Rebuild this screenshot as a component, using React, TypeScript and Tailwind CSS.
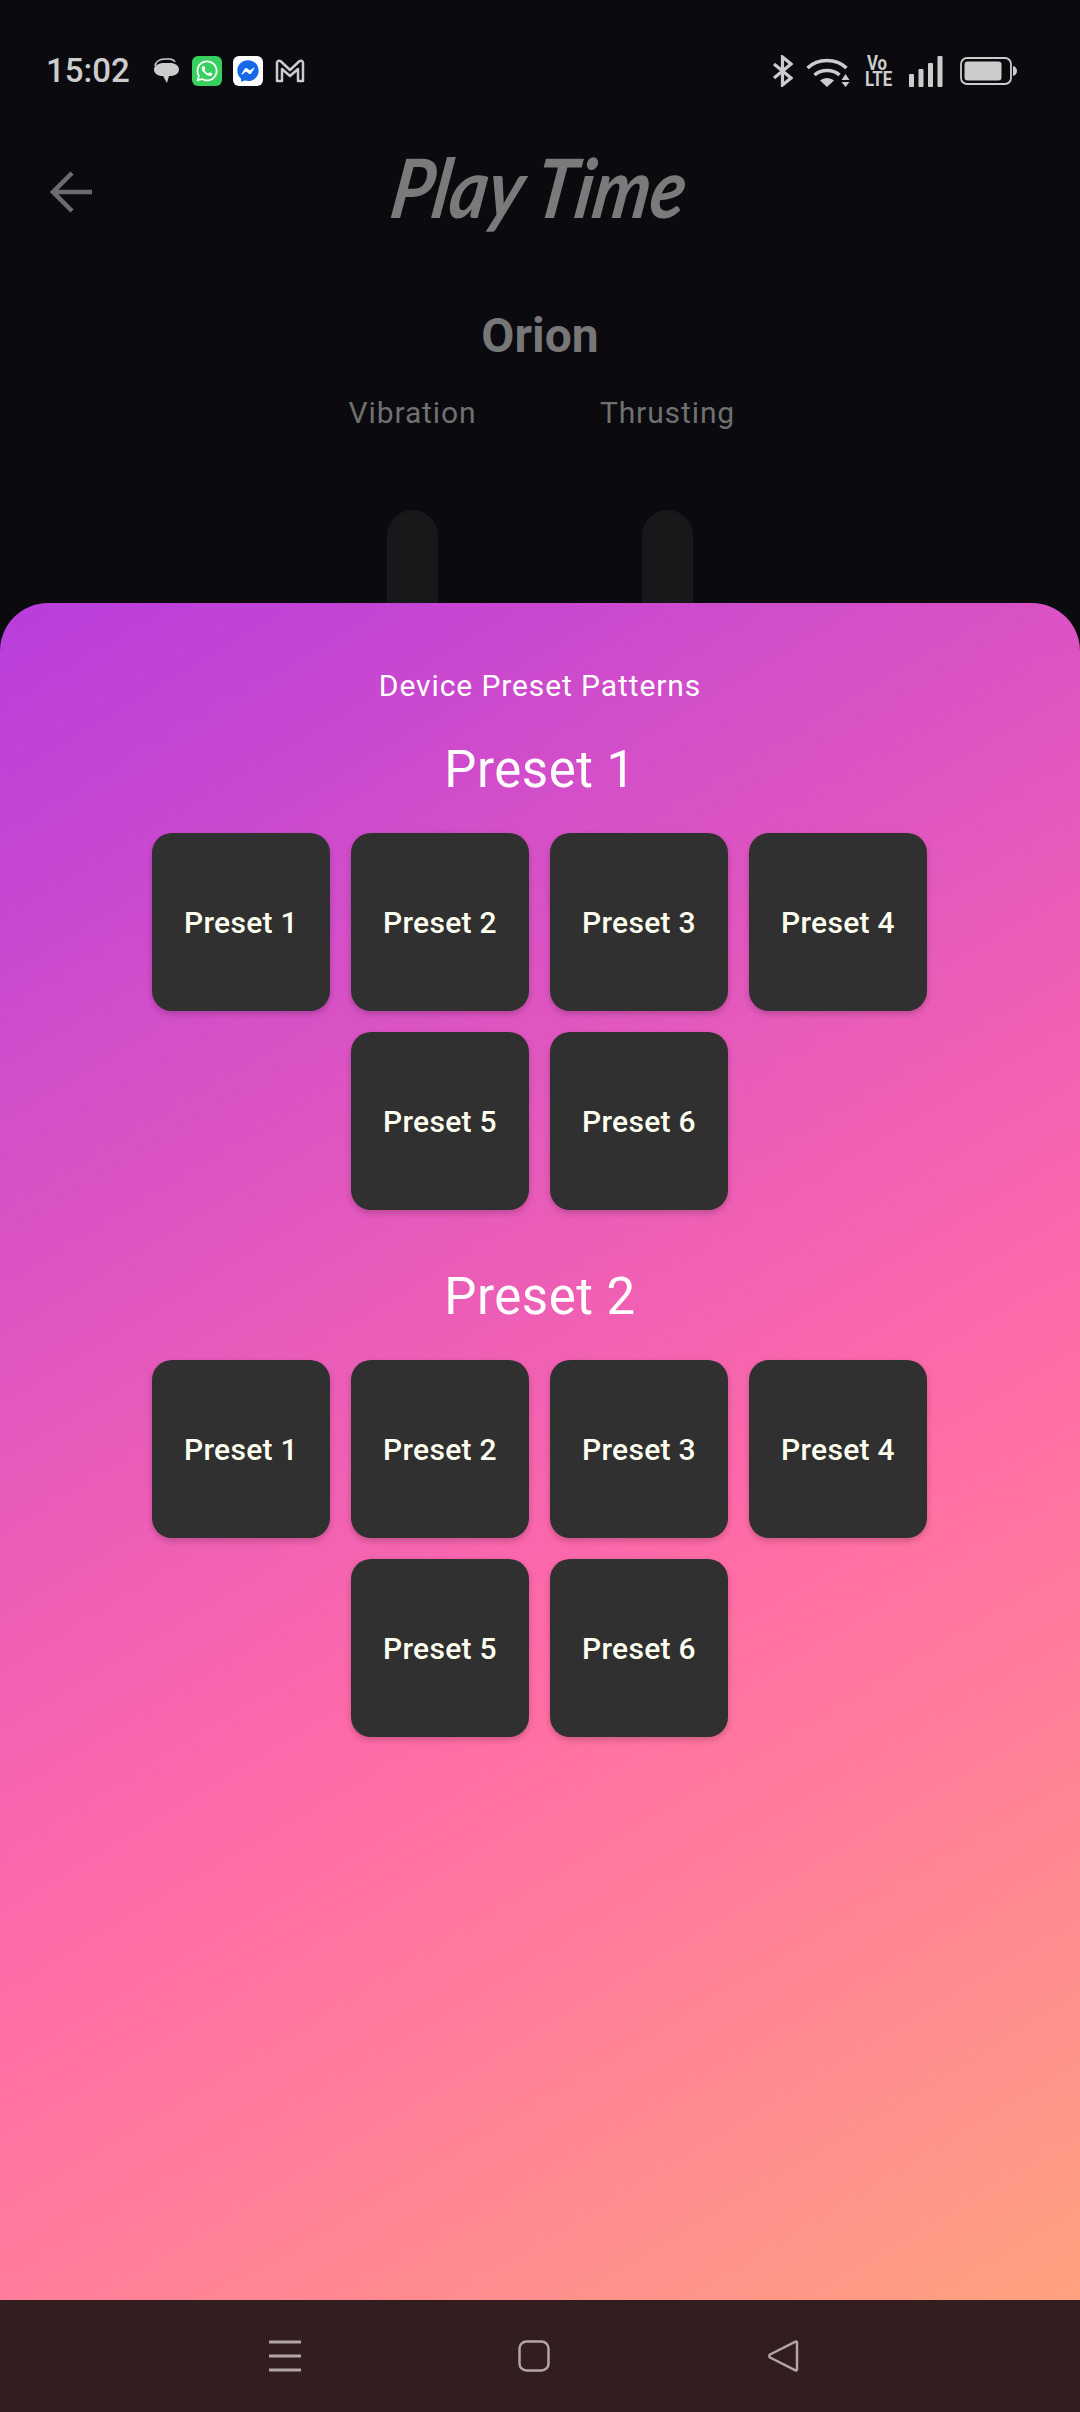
import { FaWhatsapp, FaFacebookMessenger } from 'react-icons/fa';

const roboto = "font-['Roboto',sans-serif]";

function PresetGroup({ title }: { title: string }) {
  const names = ['Preset 1', 'Preset 2', 'Preset 3', 'Preset 4', 'Preset 5', 'Preset 6'];
  return (
    <div className="flex flex-col items-center">
      <h2 className="text-[51px] leading-[60px] tracking-[0.5px] text-white">{title}</h2>
      <div className="mt-[33px] mr-[1px] flex w-[776px] flex-wrap justify-center gap-x-[21px] gap-y-[21px]">
        {names.map((name) => (
          <button
            key={name}
            className="flex h-[178px] w-[178px] items-center justify-center rounded-[20px] bg-[#303030] pt-[1px] text-[30px] leading-[40px] font-medium tracking-[0.3px] text-[#fffff0] shadow-[0_3px_6px_rgba(0,0,0,0.2)]"
          >
            {name}
          </button>
        ))}
      </div>
    </div>
  );
}

function StatusLeft() {
  return (
    <div className="flex items-center">
      <span className="text-[33px] leading-[40px] font-medium text-[#cccccc]">15:02</span>
      {/* chat bubbles */}
      <svg className="ml-[24px] h-[26px] w-[25px]" viewBox="0 0 25 26" fill="none">
        <path d="M1 8C2 3 6 1 11 1h4c3 0 5 1 6 3" stroke="#cccccc" strokeWidth="1.500" />
        <path d="M10 5h6c5 0 9 2.500 9 6.500S21 18 16 18h-1l-2 7-4-7H8c-4 0-8-2.500-8-6.500S5 5 10 5z" fill="#cccccc" />
      </svg>
      <span className="ml-[13px] flex h-[30px] w-[30px] items-center justify-center rounded-[6px] bg-[#37cf5d]">
        <FaWhatsapp className="h-[24px] w-[24px] text-white" />
      </span>
      <span className="ml-[11px] flex h-[30px] w-[30px] items-center justify-center rounded-[6px] bg-white">
        <FaFacebookMessenger className="h-[22px] w-[22px] text-[#1668e8]" />
      </span>
      {/* gmail outline */}
      <svg className="ml-[12px] h-[24px] w-[30px]" viewBox="0 0 30 24" fill="none" stroke="#cccccc" strokeWidth="2.500" strokeLinejoin="round">
        <path d="M2 22V4c0-2 2-3 4-1.500L15 11l9-8.500C26 1 28 2 28 4v18h-5V10l-8 7-8-7v12z" />
      </svg>
    </div>
  );
}

function StatusRight() {
  return (
    <div className="flex items-center">
      <svg className="h-[32px] w-[21px]" viewBox="0 0 21 32" fill="none" stroke="#cccccc" strokeWidth="3.200">
        <path d="M2 9l17 14-8.500 7V2L19 9 2 23" />
      </svg>
      <svg className="ml-[13px] h-[31px] w-[44px]" viewBox="0 0 44 31" fill="none">
        <path d="M1.500 12C12 2 30 2 40.500 12" stroke="#cccccc" strokeWidth="3.500" />
        <path d="M8.500 19C15 13 27 13 33.500 19" stroke="#cccccc" strokeWidth="3.500" />
        <path d="M21 31l-7-6.500c4-3.500 10-3.500 14 0z" fill="#cccccc" />
        <path d="M39.500 18l4 6h-8zM39.500 31l4-5h-8z" fill="#cccccc" />
      </svg>
      <div className="ml-[12px] w-[30px] origin-center scale-x-[0.8] text-center text-[21px] leading-[16px] font-bold text-[#cccccc]">
        Vo
        <br />
        LTE
      </div>
      <svg className="ml-[17px] h-[31px] w-[34px]" viewBox="0 0 34 31" fill="#cccccc">
        <rect x="0" y="18" width="5" height="13" rx="1" />
        <rect x="9.500" y="13" width="5" height="18" rx="1" />
        <rect x="19" y="7" width="5" height="24" rx="1" />
        <rect x="28.500" y="0" width="5" height="31" rx="1" />
      </svg>
      <svg className="ml-[17px] h-[28px] w-[57px]" viewBox="0 0 57 28" fill="none">
        <rect x="1" y="1" width="50" height="26" rx="6" stroke="#cccccc" strokeWidth="1.800" />
        <rect x="4.500" y="4.500" width="37" height="19" rx="3" fill="#cccccc" />
        <path d="M53 9c2.500.5 4 2.500 4 5s-1.500 4.500-4 5z" fill="#cccccc" />
      </svg>
    </div>
  );
}

export default function App() {
  return (
    <div className={`flex h-[2412px] w-[1080px] flex-col overflow-hidden bg-[#0a0a0f] ${roboto}`}>
      {/* Dimmed screen behind the sheet */}
      <div className="flex h-[603px] shrink-0 flex-col overflow-hidden">
        <div className="flex h-[142px] shrink-0 items-center justify-between pr-[63px] pl-[46px]">
          <StatusLeft />
          <StatusRight />
        </div>

        <div className="grid h-[100px] shrink-0 grid-cols-[1fr_auto_1fr] items-center">
          <svg className="ml-[50px] h-[42px] w-[42px]" viewBox="0 0 42 42" fill="none" stroke="#6b6b70" strokeWidth="4.500">
            <path d="M22 2L3 21l19 19M3 21h39" />
          </svg>
          <div className="origin-center -translate-y-[6px] -skew-x-[10deg] scale-x-[0.88] font-['Lato',sans-serif] text-[82px] leading-[100px] font-bold text-[#7a7a7a] italic">
            Play Time
          </div>
          <div />
        </div>

        <div className="mt-[64px] text-center text-[48px] leading-[60px] font-bold text-[#777777]">Orion</div>

        <div className="mt-[27px] flex justify-center">
          <div className="flex w-[255px] flex-col items-center">
            <span className="text-[30px] leading-[40px] tracking-[0.9px] text-[#707070]">Vibration</span>
            <div className="mt-[77px] h-[120px] w-[51px] rounded-full bg-[#18181a]" />
          </div>
          <div className="flex w-[255px] flex-col items-center">
            <span className="text-[30px] leading-[40px] tracking-[0.9px] text-[#707070]">Thrusting</span>
            <div className="mt-[77px] h-[120px] w-[51px] rounded-full bg-[#18181a]" />
          </div>
        </div>
      </div>

      {/* Bottom sheet */}
      <div className="flex flex-1 flex-col items-center rounded-t-[48px] bg-[linear-gradient(149deg,#b83ddd_0%,#ff6aa8_58%,#ffa17f_100%)] pt-[63px]">
        <div className="text-[30px] leading-[40px] tracking-[0.9px] text-white">Device Preset Patterns</div>
        <div className="mt-[34px]">
          <PresetGroup title="Preset 1" />
        </div>
        <div className="mt-[57px]">
          <PresetGroup title="Preset 2" />
        </div>
      </div>

      {/* Nav bar */}
      <div className="flex h-[112px] shrink-0 items-center bg-[#321e1e] pl-[160px]">
        <div className="grid grid-cols-[249px_249px_249px]">
          <div className="flex justify-center">
            <svg className="h-[32px] w-[32px]" viewBox="0 0 32 32" stroke="#b3a5a5" strokeWidth="3">
              <path d="M0 2h32M0 16h32M0 30h32" />
            </svg>
          </div>
          <div className="flex justify-center">
            <svg className="h-[32px] w-[32px]" viewBox="0 0 32 32" fill="none" stroke="#b3a5a5" strokeWidth="2.500">
              <rect x="1.500" y="1.500" width="29" height="29" rx="7" />
            </svg>
          </div>
          <div className="flex justify-center">
            <svg className="h-[32px] w-[32px]" viewBox="0 0 32 32" fill="none" stroke="#b3a5a5" strokeWidth="2.500" strokeLinejoin="round">
              <path d="M30 2.500v27a1 1 0 0 1-1.500.8L3 17.500a2 2 0 0 1 0-3L28.500 1.700a1 1 0 0 1 1.500.8z" />
            </svg>
          </div>
        </div>
      </div>
    </div>
  );
}
